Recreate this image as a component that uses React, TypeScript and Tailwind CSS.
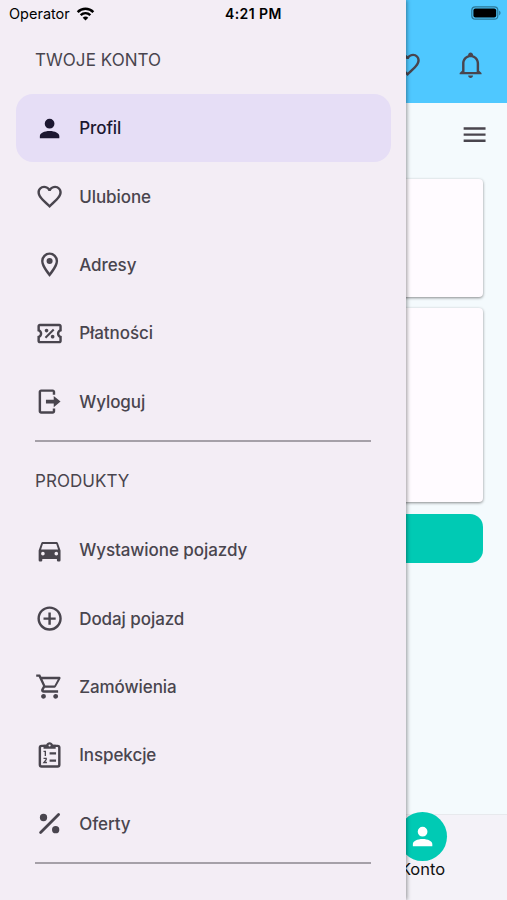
import React from "react";

const paths = {
  account:
    "M12,4A4,4 0 0,1 16,8A4,4 0 0,1 12,12A4,4 0 0,1 8,8A4,4 0 0,1 12,4M12,14C16.42,14 20,15.79 20,18V20H4V18C4,15.79 7.58,14 12,14Z",
  heart:
    "M12.1,18.55L12,18.65L11.89,18.55C7.14,14.24 4,11.39 4,8.5C4,6.5 5.5,5 7.5,5C9.04,5 10.54,6 11.07,7.36H12.93C13.46,6 14.96,5 16.5,5C18.5,5 20,6.5 20,8.5C20,11.39 16.86,14.24 12.1,18.55M16.5,3C14.76,3 13.09,3.81 12,5.08C10.91,3.81 9.24,3 7.5,3C4.42,3 2,5.41 2,8.5C2,12.27 5.4,15.36 10.55,20.03L12,21.35L13.45,20.03C18.6,15.36 22,12.27 22,8.5C22,5.41 19.58,3 16.5,3Z",
  marker:
    "M12,6.5A2.5,2.5 0 0,1 14.5,9A2.5,2.5 0 0,1 12,11.5A2.5,2.5 0 0,1 9.5,9A2.5,2.5 0 0,1 12,6.5M12,2A7,7 0 0,1 19,9C19,14.25 12,22 12,22C12,22 5,14.25 5,9A7,7 0 0,1 12,2M12,4A5,5 0 0,0 7,9C7,10 7,12 12,18.71C17,12 17,10 17,9A5,5 0 0,0 12,4Z",
  ticket:
    "M14.8 8L16 9.2L9.2 16L8 14.8L14.8 8M4 4H20C21.11 4 22 4.89 22 6V10C20.9 10 20 10.9 20 12C20 13.11 20.9 14 22 14V18C22 19.11 21.11 20 20 20H4C2.9 20 2 19.11 2 18V14C3.11 14 4 13.11 4 12C4 10.9 3.11 10 2 10V6C2 4.89 2.9 4 4 4M4 6V8.54C5.24 9.26 6 10.57 6 12C6 13.43 5.24 14.75 4 15.46V18H20V15.46C18.76 14.74 18 13.43 18 12C18 10.57 18.76 9.25 20 8.54V6H4M9.5 8C10.33 8 11 8.67 11 9.5S10.33 11 9.5 11 8 10.33 8 9.5 8.67 8 9.5 8M14.5 13C15.33 13 16 13.67 16 14.5S15.33 16 14.5 16 13 15.33 13 14.5 13.67 13 14.5 13Z",
  logout:
    "M5,2H14.6C15.7,2 16.6,2.9 16.6,4V6.3H14.6V4H5V20H14.6V17.7H16.6V20C16.6,21.1 15.7,22 14.6,22H5C3.9,22 3,21.1 3,20V4C3,2.9 3.9,2 5,2M9,10.4H15.4V7.3L21,12L15.4,16.7V13.6H9V10.4Z",
  car:
    "M5,11L6.5,6.5H17.5L19,11M17.5,16A1.5,1.5 0 0,1 16,14.5A1.5,1.5 0 0,1 17.5,13A1.5,1.5 0 0,1 19,14.5A1.5,1.5 0 0,1 17.5,16M6.5,16A1.5,1.5 0 0,1 5,14.5A1.5,1.5 0 0,1 6.5,13A1.5,1.5 0 0,1 8,14.5A1.5,1.5 0 0,1 6.5,16M18.92,6C18.72,5.42 18.16,5 17.5,5H6.5C5.84,5 5.28,5.42 5.08,6L3,12V20A1,1 0 0,0 4,21H5A1,1 0 0,0 6,20V19H18V20A1,1 0 0,0 19,21H20A1,1 0 0,0 21,20V12L18.92,6Z",
  plus:
    "M12,20C7.59,20 4,16.41 4,12C4,7.59 7.59,4 12,4C16.41,4 20,7.59 20,12C20,16.41 16.41,20 12,20M12,2A10,10 0 0,0 2,12A10,10 0 0,0 12,22A10,10 0 0,0 22,12A10,10 0 0,0 12,2M13,7H11V11H7V13H11V17H13V13H17V11H13V7Z",
  cart:
    "M17,18A2,2 0 0,1 19,20A2,2 0 0,1 17,22C15.89,22 15,21.1 15,20C15,18.89 15.89,18 17,18M1,2H4.27L5.21,4H20A1,1 0 0,1 21,5C21,5.17 20.95,5.34 20.88,5.5L17.3,11.97C16.96,12.58 16.3,13 15.55,13H8.1L7.2,14.63L7.17,14.75A0.25,0.25 0 0,0 7.42,15H19V17H7C5.89,17 5,16.1 5,15C5,14.65 5.09,14.32 5.24,14.04L6.6,11.59L3,4H1V2M7,18A2,2 0 0,1 9,20A2,2 0 0,1 7,22C5.89,22 5,21.1 5,20C5,18.89 5.89,18 7,18M16,11L18.78,6H6.14L8.5,11H16Z",
  bell:
    "M10 21H14C14 22.1 13.1 23 12 23S10 22.1 10 21M21 19V20H3V19L5 17V11C5 7.9 7 5.2 10 4.3V4C10 2.9 10.9 2 12 2S14 2.9 14 4V4.3C17 5.2 19 7.9 19 11V17L21 19M17 11C17 8.2 14.8 6 12 6S7 8.2 7 11V18H17V11Z",
  menu: "M3,6H21V8H3V6M3,11H21V13H3V11M3,16H21V18H3V16Z",
};

function Icon({ name }: { name: keyof typeof paths }) {
  return (
    <svg viewBox="0 0 24 24" fill="currentColor" className="size-[29.2px] shrink-0">
      <path d={paths[name]} />
    </svg>
  );
}

function ClipboardIcon() {
  return (
    <svg viewBox="0 0 24 24" fill="none" stroke="currentColor" className="size-[29.2px] shrink-0">
      <rect x="4" y="4" width="16" height="17" rx="1.4" strokeWidth="2" />
      <path d="M7 3H9.2C9.6 1.8 10.7 1 12 1S14.4 1.8 14.8 3H17V6.4H7Z" fill="currentColor" stroke="none" />
      <circle cx="12" cy="3.7" r=".9" fill="#f3edf5" stroke="none" />
      <path d="M12 10.2H17.3M12 16.2H17.3" strokeWidth="1.8" />
      <path d="M7 8.5H8.5V12.3M7 14.3H9.2V15.3L7.3 17.7H9.8" strokeWidth="1.1" />
    </svg>
  );
}

function PercentIcon() {
  return (
    <svg viewBox="0 0 24 24" fill="currentColor" className="size-[29.2px] shrink-0">
      <path d="M19.4 4.6L4.6 19.4" stroke="currentColor" strokeWidth="2.3" strokeLinecap="round" />
      <circle cx="7" cy="7" r="3" />
      <circle cx="17" cy="17" r="3" />
    </svg>
  );
}

function Item({ icon, label, active }: { icon: React.ReactNode; label: string; active?: boolean }) {
  return (
    <div
      className={
        active
          ? "flex h-[68.4px] items-center gap-[15px] rounded-[17px] bg-[#e6def6] pl-[19px] text-[#1c1730]"
          : "flex h-[68.4px] items-center gap-[15px] pl-[19px] text-[#49454e]"
      }
    >
      {icon}
      <span className="text-[17px] font-medium leading-6 tracking-[-0.07px]">{label}</span>
    </div>
  );
}

function Drawer() {
  return (
    <aside className="absolute inset-y-0 left-0 flex w-[406px] flex-col bg-[#f3edf5] shadow-[1px_0_4px_rgba(0,0,0,0.4)]">
      <div className="flex h-[27px] shrink-0 items-center pl-[9px] text-black">
        <span className="w-[62px] text-[14.5px]">Operator</span>
        <svg viewBox="0 0 20 15" className="ml-[5px] h-[14px] w-[19px]" fill="none" stroke="currentColor" strokeWidth="2.7">
          <path d="M1.6 5.4C6.3 .8 13.7 .8 18.4 5.4" />
          <path d="M4.8 8.7C7.8 6 12.2 6 15.2 8.7" />
          <path d="M7 11.4C8.7 9.8 11.3 9.8 13 11.4L10 14.4Z" fill="currentColor" stroke="none" />
        </svg>
        <span className="ml-[130px] text-[14px] font-semibold tracking-[0.4px]">4:21 PM</span>
      </div>
      <h2 className="mt-[21px] h-6 pl-[35px] text-[17px] leading-6 tracking-[0.05px] text-[#49454e]">TWOJE KONTO</h2>
      <nav className="mt-[22px] pr-[15px] pl-4">
        <Item active icon={<Icon name="account" />} label="Profil" />
        <Item icon={<Icon name="heart" />} label="Ulubione" />
        <Item icon={<Icon name="marker" />} label="Adresy" />
        <Item icon={<Icon name="ticket" />} label="Płatności" />
        <Item icon={<Icon name="logout" />} label="Wyloguj" />
      </nav>
      <hr className="mx-[35px] mt-1 h-[2px] border-0 bg-[#a5a0a8]" />
      <h2 className="mt-[27px] h-6 pl-[35px] text-[17px] leading-6 tracking-[0.05px] text-[#49454e]">PRODUKTY</h2>
      <nav className="mt-[23px] pr-[15px] pl-4">
        <Item icon={<Icon name="car" />} label="Wystawione pojazdy" />
        <Item icon={<Icon name="plus" />} label="Dodaj pojazd" />
        <Item icon={<Icon name="cart" />} label="Zamówienia" />
        <Item icon={<ClipboardIcon />} label="Inspekcje" />
        <Item icon={<PercentIcon />} label="Oferty" />
      </nav>
      <hr className="mx-[35px] mt-1 h-[2px] border-0 bg-[#a5a0a8]" />
    </aside>
  );
}

export default function App() {
  return (
    <div className="relative flex h-[900px] w-[507px] flex-col overflow-hidden bg-[#f4fafd] font-[Inter,sans-serif]">
      <header className="flex h-[103px] shrink-0 flex-col items-end bg-[#4fc8ff]">
        <div className="flex h-[26px] items-center pr-[6px]">
          <svg viewBox="0 0 30 14" className="h-[14px] w-[30px]">
            <rect x=".8" y=".8" width="26" height="12.4" rx="3.5" fill="none" stroke="#2b7797" strokeWidth="1.2" />
            <rect x="2.4" y="2.4" width="22.8" height="9.2" rx="2" fill="#000" />
            <path d="M28.2 4.6C30 5.6 30 8.4 28.2 9.4Z" fill="#2b7797" />
          </svg>
        </div>
        <div className="mt-[23.5px] flex gap-[34px] pr-[22px] text-[#49454e]">
          <Icon name="heart" />
          <Icon name="bell" />
        </div>
      </header>
      <div className="flex h-[76px] shrink-0 justify-end pt-[17px] pr-[18px] text-[#49454e]">
        <Icon name="menu" />
      </div>
      <main className="flex grow flex-col pr-6 pl-6">
        <section className="h-[118px] rounded-[4px] bg-[#fffbff] shadow-[0_1px_3px_rgba(0,0,0,0.45)]" />
        <section className="mt-[11px] h-[194px] rounded-[4px] bg-[#fffbff] shadow-[0_1px_3px_rgba(0,0,0,0.45)]" />
        <div className="mt-3 h-[49px] rounded-[13px] bg-[#00cab4]" />
      </main>
      <footer className="flex h-[86px] shrink-0 justify-end border-t border-[#e7e9ed] bg-[#f4f2f8] pr-[60px]">
        <div className="-mt-[3px] flex w-[49px] flex-col items-center">
          <div className="flex size-[49px] shrink-0 items-center justify-center rounded-full bg-[#00cab4] text-white">
            <Icon name="account" />
          </div>
          <span className="-mt-1 text-[16.5px] leading-6 text-[#111]">Konto</span>
        </div>
      </footer>
      <Drawer />
    </div>
  );
}
